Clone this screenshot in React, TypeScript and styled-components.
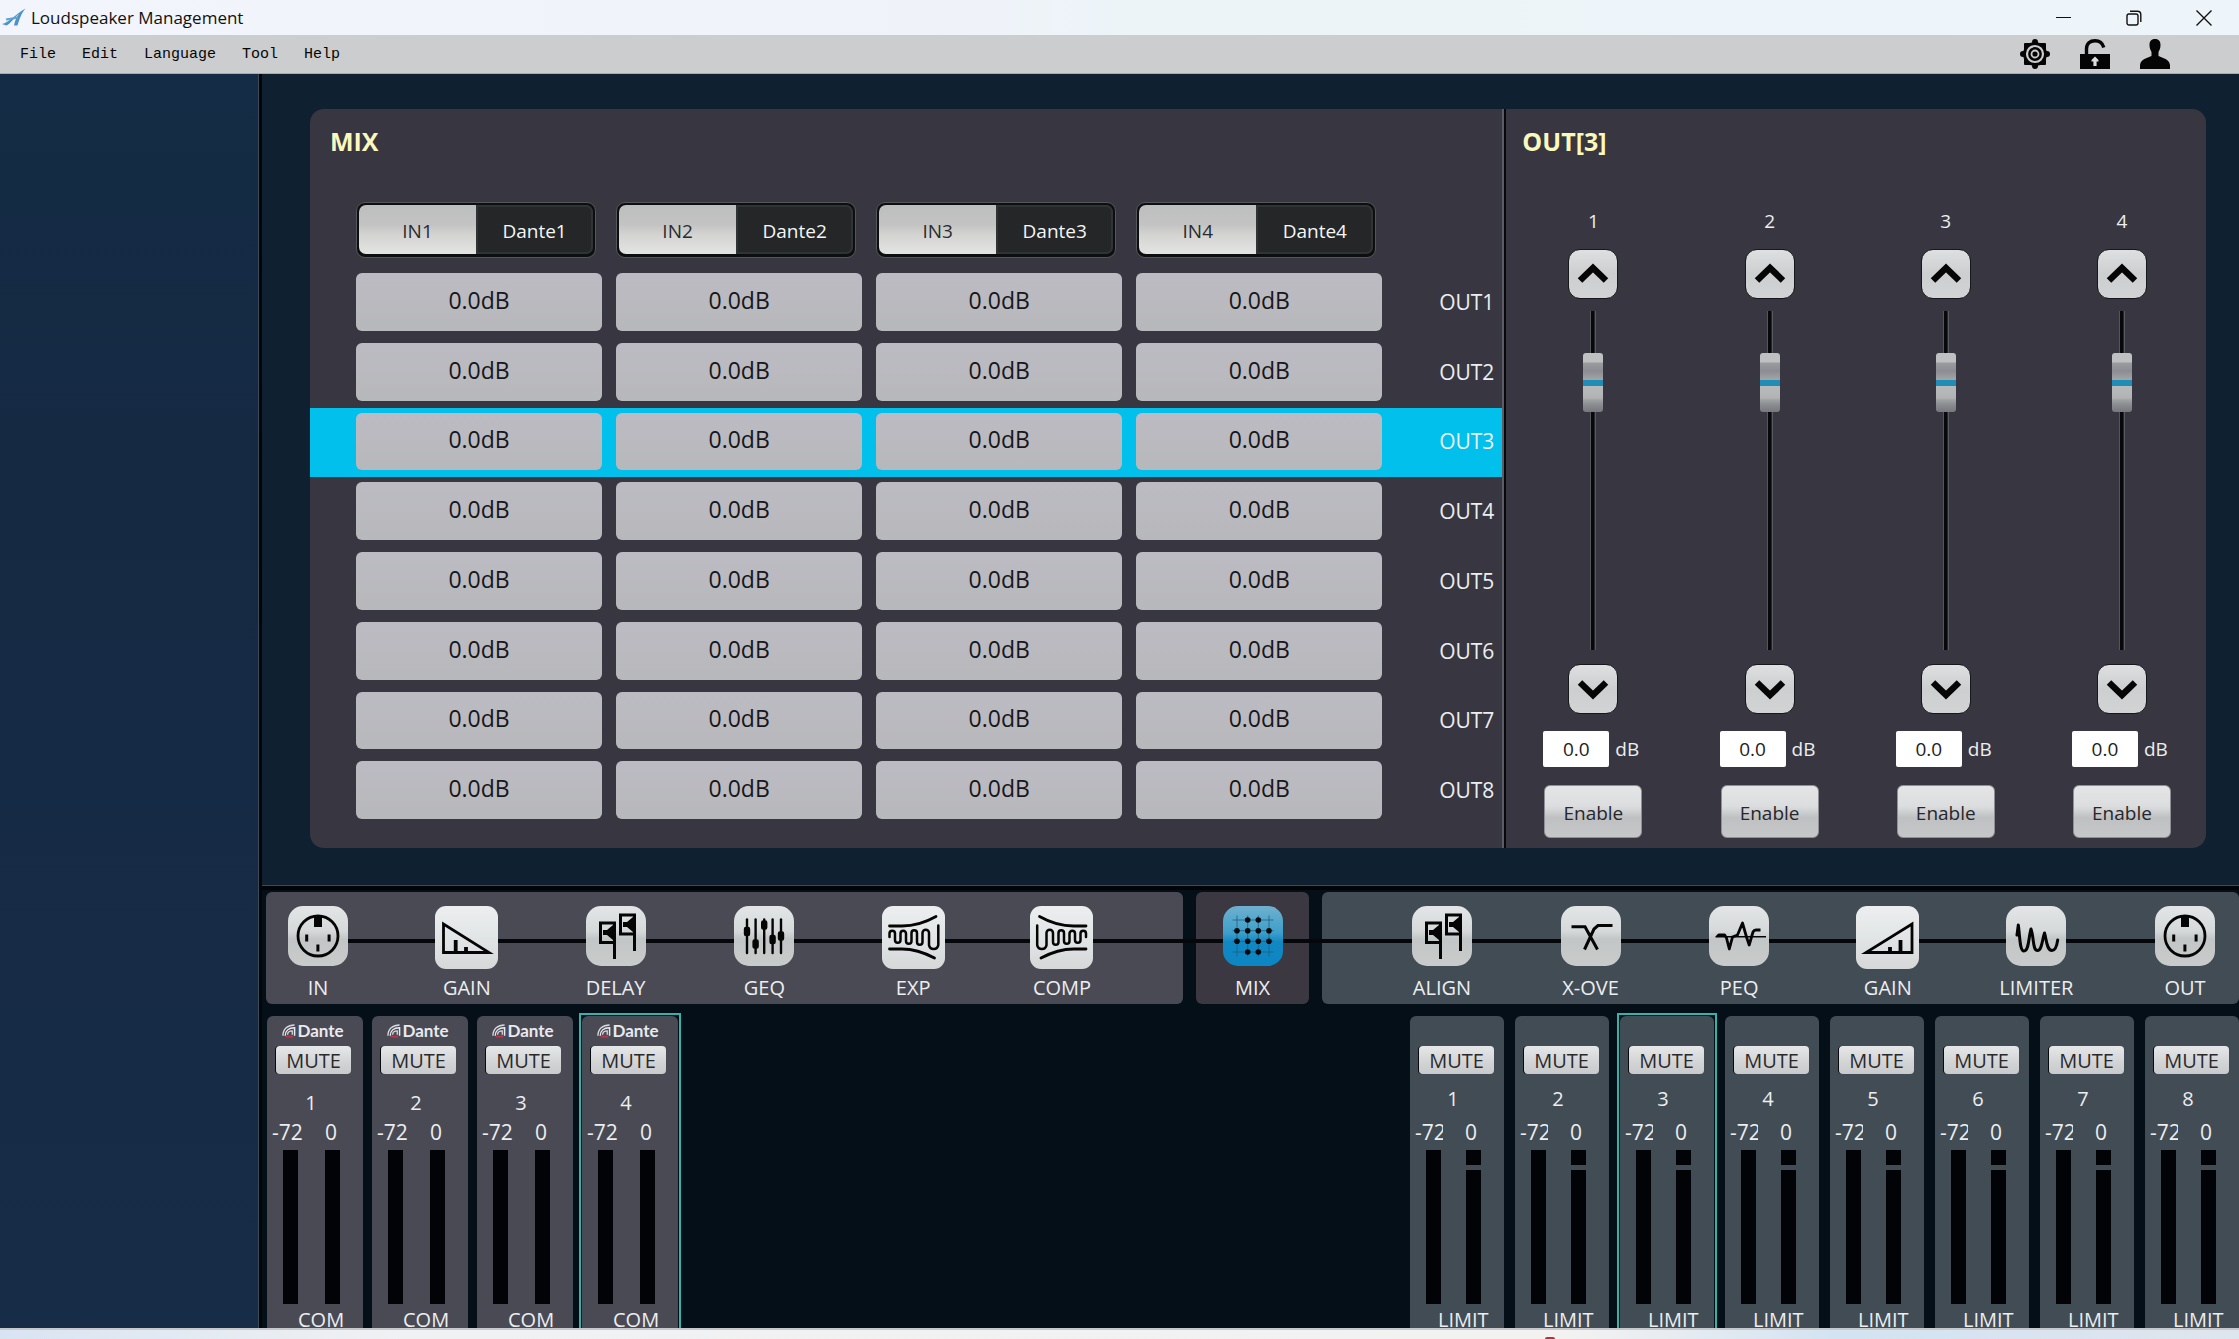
import React, { useState } from "react";
import styled, { createGlobalStyle, css } from "styled-components";

const GlobalStyle = createGlobalStyle`
  *, *::before, *::after { box-sizing: border-box; }
  body {
    margin: 0;
    background: #050f18;
    font-family: "Open Sans", "Noto Sans", sans-serif;
    font-size: 20px;
    color: #eceef0;
  }
  button, input { font: inherit; color: inherit; margin: 0; }
  button { cursor: pointer; padding: 0; border: 0; }
`;

const metal = "linear-gradient(#e4e5e6 0%, #dcdddf 40%, #bfc0c2 62%, #c6c7c9 100%)";

/* ---------- window frame ---------- */

const Window = styled.div`
  display: flex;
  flex-direction: column;
  height: 100vh;
  min-height: 1100px;
  overflow: hidden;
`;

const TitleBar = styled.header`
  display: flex;
  align-items: center;
  height: 35px;
  padding-left: 2px;
  background: linear-gradient(90deg, #f2f5fb, #eff3f9 45%, #ecf4f8 50%, #eef5fa);
  color: #111;
`;

const AppTitle = styled.h1`
  flex: 1;
  margin: 0 0 0 5px;
  font-size: 17px;
  line-height: 24px;
  font-weight: 400;
`;

const WindowButton = styled.button`
  display: grid;
  place-items: center;
  width: 70px;
  height: 35px;
  background: none;
`;

const MenuBar = styled.div`
  display: flex;
  align-items: center;
  justify-content: space-between;
  height: 39px;
  padding: 0 69px 0 7px;
  background: #cccdce;
  border-bottom: 1px solid #a9acae;
  color: #050505;
`;

const MenuList = styled.nav`
  display: flex;
`;

const MenuItem = styled.button`
  padding: 2px 13px 0;
  background: none;
  font-family: "Liberation Mono", monospace;
  font-size: 15px;
  line-height: 24px;
`;

const ToolIcons = styled.div`
  display: flex;
  gap: 30px;
`;

const ToolButton = styled.button`
  display: block;
  width: 30px;
  height: 30px;
  background: none;
  svg { display: block; }
`;

const Body = styled.div`
  display: flex;
  flex: 1;
  min-height: 0;
`;

const Sidebar = styled.aside`
  width: 262px;
  background: linear-gradient(#142c45, #152943 30%, #172c47);
  border-right: 3px solid #02060a;
  box-shadow: inset -1px 0 #3b4a55;
`;

const Workspace = styled.main`
  display: flex;
  flex: 1;
  flex-direction: column;
  min-width: 0;
`;

const TaskBar = styled.footer`
  display: flex;
  align-items: flex-end;
  height: 11px;
  padding-left: 69%;
  overflow: hidden;
  border-top: 2px solid #c6c8cc;
  background: linear-gradient(90deg, #d9e4f2, #f0f1f3 18%, #f3f2f1 70%, #d3e3f1 82%, #dfe5ee);
`;

const Alert = styled.i`
  width: 10px;
  height: 2px;
  border-radius: 8px 8px 0 0;
  background: #b5313c;
`;

/* ---------- editor ---------- */

const Editor = styled.section`
  display: flex;
  flex: 1;
  min-height: 0;
  padding: 35px 33px 37px 48px;
  background: #0f2130;
  border-bottom: 1px solid #42494d;
`;

const Panel = styled.div`
  display: grid;
  flex: 1;
  grid-template-columns: minmax(0, 1.71fr) minmax(0, 1fr);
  overflow: hidden;
  border-radius: 14px;
  background: #383741;
`;

const MixPane = styled.section`
  display: flex;
  flex-direction: column;
  padding-bottom: 22px;
  border-right: 2px solid #07070c;
  box-shadow: inset -2px 0 #5b5c64;
`;

const PaneTitle = styled.h2<{ $indent: number }>`
  margin: 0;
  padding: 15px 0 0 ${(p) => p.$indent}px;
  color: #fbf8bd;
  font-size: 25px;
  line-height: 34px;
`;

const Matrix = styled.table`
  display: flex;
  flex: 1;
  flex-direction: column;
  margin: 44px 2px 0 0;
`;

const MatrixHead = styled.thead`
  display: block;
  margin-bottom: 10px;
`;

const MatrixBody = styled.tbody`
  display: flex;
  flex: 1;
  flex-direction: column;
`;

const matrixGrid = css`
  display: grid;
  grid-template-columns: repeat(4, minmax(0, 1fr)) 106px;
  column-gap: 14px;
  padding-left: 46px;
`;

const HeadRow = styled.tr`
  ${matrixGrid}
`;

const HeadCell = styled.th`
  padding: 0 6px 0 0;
  font-weight: 400;
`;

const MatrixRow = styled.tr<{ $active: boolean }>`
  ${matrixGrid}
  flex: 1;
  background: ${(p) => (p.$active ? "#02c0ec" : "transparent")};
`;

const MatrixCell = styled.td`
  display: flex;
  padding: 5px 0 7px;
`;

const Level = styled.button`
  flex: 1;
  padding-bottom: 4px;
  border-radius: 6px;
  background: linear-gradient(#bcbbc3, #b7b8bb);
  color: #16171b;
  font-size: 23px;
`;

const RowLabel = styled.th`
  padding: 0 8px 2px 0;
  align-self: center;
  text-align: right;
  font-size: 21px;
  font-weight: 400;
  color: #eceef0;
`;

const Switch = styled.div`
  display: grid;
  grid-template-columns: 1fr 1fr;
  height: 56px;
  padding: 2px 2px 3px;
  border: 1px solid #55565a;
  border-radius: 9px;
  background: #0d0e0f;
`;

const SwitchHalf = styled.button<{ $on: boolean }>`
  padding-top: 2px;
  border-radius: ${(p) => (p.$on ? "7px 0 0 7px" : "0 7px 7px 0")};
  background: ${(p) =>
    p.$on ? "linear-gradient(#bdbebe 0%, #c3c3c3 40%, #d4d5d3 62%, #e4e5e3 100%)" : "#242627"};
  box-shadow: ${(p) => (p.$on ? "none" : "inset 0 0 0 2px #303334")};
  color: ${(p) => (p.$on ? "#2b2b2e" : "#f5f6f6")};
  font-size: 19px;
`;

/* ---------- output faders ---------- */

const OutPane = styled.section`
  display: flex;
  flex-direction: column;
`;

const Faders = styled.div`
  display: flex;
  flex: 1;
  justify-content: space-between;
  padding: 48px 34px 10px 37px;
`;

const Fader = styled.div`
  display: flex;
  flex-direction: column;
  align-items: center;
  width: 100px;
`;

const FaderName = styled.span`
  margin-bottom: 13px;
  font-size: 19px;
  line-height: 30px;
`;

const StepButton = styled.button`
  display: grid;
  place-items: center;
  width: 50px;
  height: 50px;
  border: 1px solid #17181a;
  border-radius: 12px;
  background: linear-gradient(#dedfe0, #cdcecf 50%, #d2d3d4);
`;

const Slider = styled.input`
  flex: 1;
  width: 20px;
  min-height: 0;
  margin: 12px 0 14px;
  writing-mode: vertical-lr;
  direction: rtl;
  appearance: none;
  background: linear-gradient(90deg, transparent 7px, #55565b 7px 8px, #08080b 8px 11px, #26262b 11px 12px, #595a60 12px 13px, transparent 13px);

  &::-webkit-slider-runnable-track { width: 20px; background: none; }
  &::-webkit-slider-thumb {
    appearance: none;
    width: 20px;
    height: 59px;
    border-radius: 3px;
    background: linear-gradient(#bfc0c2 0 9px, #9a9b9f 10px, #8c8d92 18px, #a4a5a8 27px, #1f8db5 27px 33px, #b9babc 33px, #b2b3b5 45px, #a0a1a4 47px, #8a8b8f 52px, #77787d 59px);
  }
`;

const ValueRow = styled.div`
  display: flex;
  align-items: center;
  gap: 6px;
  align-self: stretch;
  margin: 17px 0 18px;
  font-size: 19px;
`;

const ValueInput = styled.input`
  width: 66px;
  height: 36px;
  padding: 0;
  border: 0;
  border-radius: 2px;
  background: #fff;
  color: #222;
  text-align: center;
`;

const EnableButton = styled.button`
  width: 98px;
  height: 53px;
  padding-top: 2px;
  border-radius: 6px;
  background: ${metal};
  border: 1px solid #8f9093;
  color: #26272b;
  font-size: 19px;
`;

/* ---------- processing chain ---------- */

const Lower = styled.section`
  display: flex;
  flex-direction: column;
  gap: 12px;
  padding: 2px 0 0 4px;
  background: #050f18;
  border-top: 4px solid #010407;
`;

const Chain = styled.div`
  position: relative;
  display: grid;
  grid-template-columns: minmax(0, 917fr) 113px minmax(0, 917fr);
  gap: 13px;
  height: 112px;

  &::after {
    content: "";
    position: absolute;
    top: 47px;
    left: 52px;
    right: 54px;
    height: 4px;
    background: #06070b;
  }
`;

const groupTone = { input: "#4a4a55", mix: "#3b3842", output: "#424c55" };

const ChainGroup = styled.div<{ $tone: keyof typeof groupTone }>`
  display: flex;
  justify-content: ${(p) => (p.$tone === "mix" ? "center" : "space-between")};
  padding: ${(p) => ({ input: "14px 71px 0 2px", mix: "14px 0 0", output: "14px 4px 0 70px" })[p.$tone]};
  border-radius: 6px;
  background: ${(p) => groupTone[p.$tone]};
`;

const Stage = styled.button`
  position: relative;
  z-index: 1;
  display: flex;
  flex-direction: column;
  justify-content: space-between;
  align-items: center;
  width: 100px;
  height: 95px;
  background: none;
  line-height: 26px;
`;

const StageIcon = styled.span<{ $active?: boolean; $large?: boolean }>`
  display: block;
  width: ${(p) => (p.$large ? 63 : 60)}px;
  height: ${(p) => (p.$large ? 63 : 60)}px;
  border-radius: ${(p) => (p.$large ? 11 : 15)}px;
  background: ${(p) =>
    p.$active
      ? "linear-gradient(#6fb0cf, #3c9fcb 45%, #1288c2 60%, #0b86c4)"
      : p.$large
        ? "linear-gradient(#eceeef, #e2e5e6 50%, #d6d8d8)"
        : "linear-gradient(#e3e5e6, #d6d9da 42%, #c3c6c6 55%, #c9cbcb)"};
  svg { display: block; }
`;

/* ---------- meter strips ---------- */

const Strips = styled.div`
  display: flex;
  justify-content: space-between;
  height: 312px;
  padding-left: 1px;
`;

const StripGroup = styled.div<{ $gap: number }>`
  display: flex;
  gap: ${(p) => p.$gap}px;
`;

const StripFrame = styled.div<{ $selected: boolean }>`
  display: flex;
  ${(p) => p.$selected && "outline: 2px solid #32b3ab; outline-offset: 1px;"}
`;

const Strip = styled.div<{ $output?: boolean }>`
  width: ${(p) => (p.$output ? 94 : 96)}px;
  padding-top: 5px;
  overflow: hidden;
  border-radius: 6px 6px 0 0;
  background: ${(p) => (p.$output ? groupTone.output : groupTone.input)};
`;

const Brand = styled.div`
  display: flex;
  align-items: center;
  justify-content: center;
  gap: 1px;
  height: 25px;
  padding: 0 4px 6px 0;
  color: #e9e9ee;
  font-family: Lato, sans-serif;
  font-size: 17px;
  font-weight: 700;
  line-height: 20px;
`;

const MuteButton = styled.button`
  display: block;
  width: 75px;
  height: 28px;
  margin-left: 9px;
  border-radius: 4px;
  background: linear-gradient(#e6e7e8, #d2d3d4 60%, #c9cacc);
  box-shadow: -1px 0 #0a0b0e;
  color: #2a2a2c;
  line-height: 29px;
`;

const StripNumber = styled.div<{ $output?: boolean }>`
  height: 44px;
  padding: ${(p) => (p.$output ? 11 : 15)}px 8px 0 0;
  line-height: 28px;
  text-align: center;
`;

const Scale = styled.div<{ $output?: boolean }>`
  display: grid;
  grid-template-columns: ${(p) => (p.$output ? "28px 16px" : "38px 9px")} 24px;
  padding-left: 5px;
  height: 32px;
  font-size: 21px;
  line-height: 28px;
  span { overflow: hidden; }
  span:last-child { grid-column: 3; text-align: center; }
`;

const Meters = styled.div<{ $output?: boolean }>`
  display: flex;
  gap: ${(p) => (p.$output ? 25 : 27)}px;
  height: 154px;
  padding-left: 16px;
`;

const Meter = styled.div<{ $peak?: boolean }>`
  width: 15px;
  background: ${(p) => (p.$peak ? "linear-gradient(#020306 0 15px, transparent 15px 20px, #020306 20px)" : "#020306")};
`;

const StripFoot = styled.div<{ $output?: boolean }>`
  padding-left: ${(p) => (p.$output ? 28 : 31)}px;
  height: 24px;
  line-height: 32px;
`;

/* ---------- drawings ---------- */

const Connector = () => (
  <g fill="#050505">
    <circle cx="30" cy="30" r="20" fill="none" stroke="#050505" strokeWidth="2.8" />
    <path d="M26 10h8v11h-8zM17.2 28.5h3v7h-3zM39.6 28.5h3v7h-3zM28.4 38.5h3v7h-3z" />
  </g>
);

const Speakers = () => (
  <g fill="none" stroke="#050505" strokeWidth="3">
    <path d="M28.5 53V17H14.5V36.5H28.5M48.5 45V9H34.5V28H48.5" />
    <path d="M17 24h4l6-5v15l-6-5h-4zM37 16h4l6-5v15l-6-5h-4z" fill="#050505" stroke="none" />
  </g>
);

const Squiggle = () => (
  <g fill="none" stroke="#050505" strokeWidth="2.8" strokeLinecap="round">
    <path d="M7.5 20H20C35 20 46 15 54 10.5M7.5 43H20C33 43 43 47 52.5 52" />
    <path strokeWidth="2.5" d="M7.5 31V27.5A2.7 2.7 0 0 1 13 27.5V34A2.7 2.7 0 0 0 18.5 34V27.5A2.7 2.7 0 0 1 24 27.5V35A2.7 2.7 0 0 0 29.5 35V27A2.7 2.7 0 0 1 35 27V36A2.7 2.7 0 0 0 40.5 36V27A3.2 3.2 0 0 1 47 27V39A4.7 4.7 0 0 0 56.3 39V19.5" />
  </g>
);

const sliders = [[13, 25.5], [21.6, 38], [30.2, 19], [38.6, 33.5], [47, 30]];
const grid = [14, 24.7, 35.3, 46];

const drawings: Record<string, React.ReactNode> = {
  connector: <Connector />,
  speakers: <Speakers />,
  gainDown: (
    <g fill="none" stroke="#050505">
      <path d="M8.5 18V46.5H54z" strokeWidth="2.8" />
      <path d="M20.7 34V47M31 41V47" strokeWidth="3.8" />
    </g>
  ),
  gainUp: (
    <g fill="none" stroke="#050505">
      <path d="M56 18V46.5H10z" strokeWidth="2.8" />
      <path d="M44.5 34V47M34 41V47" strokeWidth="3.8" />
    </g>
  ),
  geq: (
    <g stroke="#050505" strokeWidth="2.4" strokeLinecap="round">
      {sliders.map(([x, y]) => (
        <g key={x}>
          <path d={`M${x} 13.5V47`} />
          <rect x={x - 2} y={y - 3.5} width="4" height="7" rx="1" fill="#050505" />
        </g>
      ))}
    </g>
  ),
  exp: <Squiggle />,
  comp: <g transform="translate(63.5 0) scale(-1 1)"><Squiggle /></g>,
  mix: (
    <g stroke="#1d5f80" strokeWidth="0.8" fill="#060a0d">
      {grid.map((p) => <path key={p} d={`M${p} 9.5V50.5M9.5 ${p}H50.5`} />)}
      {grid.flatMap((y, r) =>
        grid.map((x, c) =>
          (r === 0 || r === 3) && (c === 0 || c === 3) ? null : (
            <circle key={`${r}${c}`} cx={x} cy={y} r="2.8" stroke="none" />
          ),
        ),
      )}
    </g>
  ),
  xover: <path d="M10.5 20.7H24L36.5 43.5M51.5 19.5H37L33 23L23.5 43.5" fill="none" stroke="#050505" strokeWidth="3" />,
  peq: (
    <g fill="none" stroke="#050505" strokeLinejoin="round">
      <path d="M6.5 30.7H57" strokeWidth="1.6" />
      <path d="M8 30.5L10 28.8H15.5L17.5 32L20.3 43L23.5 31L28.5 29L33.5 17L37.5 31L40.2 39L44 26Q45 24 47 24H51.5" strokeWidth="2.8" />
    </g>
  ),
  limiter: (
    <path
      d="M11 29L12.3 19C14 30 13.5 45 18 45C23 45 22.5 31 25 23C28 31 26.5 44.5 31.5 44.5C36 44.5 36 34 38.5 27C40.5 33 40.5 44.5 46 44.5C50 44.5 51 39 51.7 34"
      fill="none" stroke="#050505" strokeWidth="3" strokeLinejoin="round" strokeLinecap="round"
    />
  ),
};

type StageDef = { label: string; icon: string; large?: boolean };

const inputStages: StageDef[] = [
  { label: "IN", icon: "connector" },
  { label: "GAIN", icon: "gainDown", large: true },
  { label: "DELAY", icon: "speakers" },
  { label: "GEQ", icon: "geq" },
  { label: "EXP", icon: "exp", large: true },
  { label: "COMP", icon: "comp", large: true },
];

const outputStages: StageDef[] = [
  { label: "ALIGN", icon: "speakers" },
  { label: "X-OVE", icon: "xover" },
  { label: "PEQ", icon: "peq" },
  { label: "GAIN", icon: "gainUp", large: true },
  { label: "LIMITER", icon: "limiter" },
  { label: "OUT", icon: "connector" },
];

const ChainStage = ({ label, icon, large, active }: StageDef & { active?: boolean }) => {
  const size = large ? 63 : 60;
  return (
    <Stage type="button" aria-pressed={!!active}>
      <StageIcon $active={active} $large={large}>
        <svg width={size} height={size} viewBox={`0 0 ${size} ${size}`} aria-hidden="true">{drawings[icon]}</svg>
      </StageIcon>
      {label}
    </Stage>
  );
};

const DanteMark = () => (
  <svg width="14" height="16" viewBox="0 0 15 16" fill="none" aria-hidden="true">
    <path d="M1 13C1 6 6 1.5 13.5 1.5" stroke="#d6d6dc" strokeWidth="1.5" />
    <path d="M3.5 13C3.5 8 7 4.5 13.5 4.5V13" stroke="#e9e9ee" strokeWidth="1.6" />
    <path d="M6 12C6 9.5 8 7.8 11 7.8V12" stroke="#d6d6dc" strokeWidth="1.4" />
    <path d="M4 14H12" stroke="#c2334a" strokeWidth="2" />
  </svg>
);

const Chevron = ({ up }: { up?: boolean }) => (
  <svg width="34" height="24" viewBox="0 0 34 24" fill="none" aria-hidden="true">
    <path d={up ? "M4 18.5L17 6L30 18.5" : "M4 5.5L17 18L30 5.5"} stroke="#060606" strokeWidth="6.5" />
  </svg>
);

const channels = [1, 2, 3, 4];
const outputs = [1, 2, 3, 4, 5, 6, 7, 8];

export default function App() {
  const [selected, setSelected] = useState(3);
  const [levels, setLevels] = useState([85, 85, 85, 85]);
  const move = (i: number, value: number) =>
    setLevels((all) => all.map((v, n) => (n === i ? Math.max(0, Math.min(100, value)) : v)));

  return (
    <Window>
      <GlobalStyle />
      <TitleBar>
        <svg width="24" height="19" viewBox="0 0 24 19" fill="none" aria-hidden="true">
          <path d="M0 16C7 14.500 13 6.500 23.500 0.500C19 6 17.500 11 15.500 17.500H12C13 12.500 14.500 9 17 6C12 10 8 16 4.500 17.500Z" fill="#4a93c9" />
          <path d="M4 11.500L16 9.500" stroke="#5fa3d3" strokeWidth="2" />
        </svg>
        <AppTitle>Loudspeaker Management</AppTitle>
        <WindowButton type="button" aria-label="Minimize">
          <svg width="16" height="16" viewBox="0 0 16 16"><path d="M0 7.5H15" stroke="#111" /></svg>
        </WindowButton>
        <WindowButton type="button" aria-label="Restore">
          <svg width="16" height="16" viewBox="0 0 16 16" fill="none" stroke="#111" strokeWidth="1.4">
            <rect x="1" y="4" width="11" height="11" rx="2" />
            <path d="M4 1.2H11.5A3.3 3.3 0 0 1 14.800 4.500V12" />
          </svg>
        </WindowButton>
        <WindowButton type="button" aria-label="Close">
          <svg width="16" height="16" viewBox="0 0 16 16" stroke="#111" strokeWidth="1.4"><path d="M.5.5L15.5 15.5M15.5.5L.5 15.5" /></svg>
        </WindowButton>
      </TitleBar>

      <MenuBar>
        <MenuList>
          {["File", "Edit", "Language", "Tool", "Help"].map((m) => (
            <MenuItem key={m} type="button">{m}</MenuItem>
          ))}
        </MenuList>
        <ToolIcons>
          <ToolButton type="button" aria-label="Settings">
            <svg width="30" height="30" viewBox="0 0 30 30">
              <rect x="4" y="4" width="22" height="22" rx="1" fill="#050505" />
              <circle cx="15" cy="15" r="12" fill="#050505" />
              {[0, 90, 180, 270].map((a) => (
                <circle key={a} cx="15" cy="3" r="3" fill="#050505" transform={`rotate(${a} 15 15)`} />
              ))}
              <circle cx="15" cy="15" r="8" fill="none" stroke="#cccdce" strokeWidth="2.2" />
              <circle cx="15" cy="15" r="3.5" fill="none" stroke="#cccdce" strokeWidth="1.8" />
            </svg>
          </ToolButton>
          <ToolButton type="button" aria-label="Unlock">
            <svg width="30" height="30" viewBox="0 0 30 30">
              <path d="M0 15H30V30H0z" fill="#050505" />
              <path d="M6.5 16V10C6.5 4.5 10 1.8 15 1.8C20 1.8 22.5 4 23.8 8.5" fill="none" stroke="#050505" strokeWidth="3.4" />
              <path d="M15 17.5L18.5 21V22.5H16.6V27H13.4V22.5H11.5V21z" fill="#dcdddd" />
            </svg>
          </ToolButton>
          <ToolButton type="button" aria-label="User">
            <svg width="30" height="30" viewBox="0 0 30 30">
              <path d="M15 0C19 0 20.5 2.5 20.5 6C20.5 9.5 19.5 11 18.5 13V17C23 19.5 29 19.5 30 26V30H0V26C1 19.5 7 19.5 11.5 17V13C10.5 11 9.5 9.5 9.5 6C9.5 2.5 11 0 15 0z" fill="#050505" />
            </svg>
          </ToolButton>
        </ToolIcons>
      </MenuBar>

      <Body>
        <Sidebar />
        <Workspace>
          <Editor>
            <Panel>
              <MixPane>
                <PaneTitle $indent={20}>MIX</PaneTitle>
                <Matrix>
                  <MatrixHead>
                    <HeadRow>
                      {channels.map((c) => (
                        <HeadCell key={c} scope="col">
                          <Switch>
                            <SwitchHalf type="button" $on aria-pressed="true">IN{c}</SwitchHalf>
                            <SwitchHalf type="button" $on={false} aria-pressed="false">Dante{c}</SwitchHalf>
                          </Switch>
                        </HeadCell>
                      ))}
                    </HeadRow>
                  </MatrixHead>
                  <MatrixBody>
                    {outputs.map((o) => (
                      <MatrixRow key={o} $active={o === selected}>
                        {channels.map((c) => (
                          <MatrixCell key={c}>
                            <Level type="button" onClick={() => setSelected(o)}>0.0dB</Level>
                          </MatrixCell>
                        ))}
                        <RowLabel scope="row">OUT{o}</RowLabel>
                      </MatrixRow>
                    ))}
                  </MatrixBody>
                </Matrix>
              </MixPane>

              <OutPane>
                <PaneTitle $indent={16}>OUT[{selected}]</PaneTitle>
                <Faders>
                  {channels.map((c, i) => (
                    <Fader key={c}>
                      <FaderName>{c}</FaderName>
                      <StepButton type="button" aria-label={`Raise ${c}`} onClick={() => move(i, levels[i] + 1)}>
                        <Chevron up />
                      </StepButton>
                      <Slider
                        type="range"
                        aria-label={`Level ${c}`}
                        value={levels[i]}
                        onChange={(e) => move(i, Number(e.target.value))}
                      />
                      <StepButton type="button" aria-label={`Lower ${c}`} onClick={() => move(i, levels[i] - 1)}>
                        <Chevron />
                      </StepButton>
                      <ValueRow>
                        <ValueInput id={`level-${c}`} type="text" defaultValue="0.0" />
                        <label htmlFor={`level-${c}`}>dB</label>
                      </ValueRow>
                      <EnableButton type="button">Enable</EnableButton>
                    </Fader>
                  ))}
                </Faders>
              </OutPane>
            </Panel>
          </Editor>

          <Lower>
            <Chain>
              <ChainGroup $tone="input">
                {inputStages.map((s) => <ChainStage key={s.label} {...s} />)}
              </ChainGroup>
              <ChainGroup $tone="mix">
                <ChainStage label="MIX" icon="mix" active />
              </ChainGroup>
              <ChainGroup $tone="output">
                {outputStages.map((s) => <ChainStage key={s.label} {...s} />)}
              </ChainGroup>
            </Chain>

            <Strips>
              <StripGroup $gap={9}>
                {channels.map((c) => (
                  <StripFrame key={c} $selected={c === 4}>
                    <Strip>
                      <Brand><DanteMark />Dante</Brand>
                      <MuteButton type="button">MUTE</MuteButton>
                      <StripNumber>{c}</StripNumber>
                      <Scale><span>-72</span><span>0</span></Scale>
                      <Meters><Meter /><Meter /></Meters>
                      <StripFoot>COM</StripFoot>
                    </Strip>
                  </StripFrame>
                ))}
              </StripGroup>
              <StripGroup $gap={11}>
                {outputs.map((o) => (
                  <StripFrame key={o} $selected={o === selected}>
                    <Strip $output>
                      <Brand />
                      <MuteButton type="button">MUTE</MuteButton>
                      <StripNumber $output>{o}</StripNumber>
                      <Scale $output><span>-72</span><span>0</span></Scale>
                      <Meters $output><Meter /><Meter $peak /></Meters>
                      <StripFoot $output>LIMIT</StripFoot>
                    </Strip>
                  </StripFrame>
                ))}
              </StripGroup>
            </Strips>
          </Lower>
        </Workspace>
      </Body>
      <TaskBar><Alert /></TaskBar>
    </Window>
  );
}
